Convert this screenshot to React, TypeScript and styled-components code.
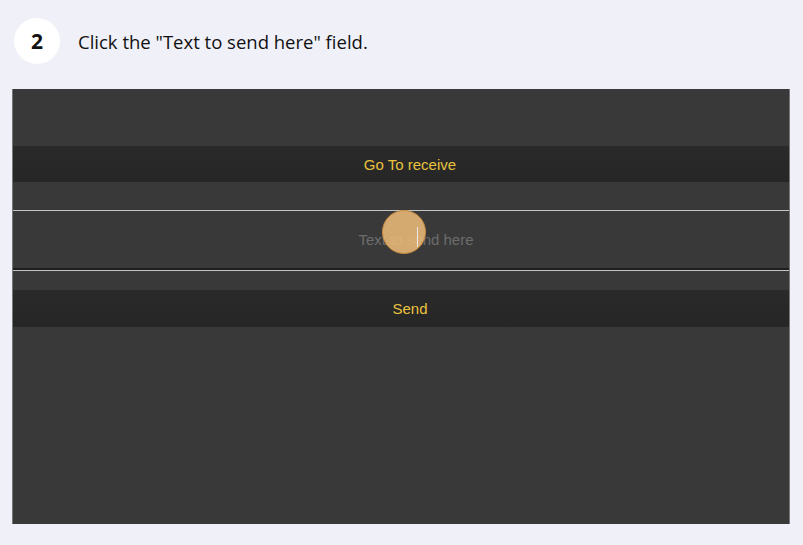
import React from "react";
import styled, { createGlobalStyle } from "styled-components";

const Global = createGlobalStyle`
  html, body { margin: 0; padding: 0; background: #eff0f8; }
  body { font-family: "Open Sans", "Noto Sans", sans-serif; }
`;

const Page = styled.div`
  width: 803px;
  height: 545px;
  background: #eff0f8;
  display: flex;
  flex-direction: column;
  overflow: hidden;
`;

const Header = styled.div`
  display: flex;
  align-items: center;
  gap: 18px;
  padding: 18px 0 0 14px;
  height: 46px;
`;

const StepBadge = styled.div`
  width: 46px;
  height: 46px;
  border-radius: 50%;
  background: #ffffff;
  display: flex;
  align-items: center;
  justify-content: center;
  font-family: "Open Sans", sans-serif;
  font-weight: 700;
  font-size: 21px;
  color: #111;
`;

const Title = styled.div`
  font-family: "Open Sans", sans-serif;
  font-size: 18.5px;
  color: #111;
`;

const Panel = styled.div`
  margin: 25px 0 0 12px;
  width: 776px;
  height: 435px;
  background: #393939;
  border-left: 1px solid #77777c;
  border-right: 1px solid #77777c;
  display: flex;
  flex-direction: column;
`;

const Spacer = styled.div<{ $h: number }>`
  height: ${(p) => p.$h}px;
  flex-shrink: 0;
`;

const Button = styled.div<{ $h: number }>`
  height: ${(p) => p.$h}px;
  flex-shrink: 0;
  background: linear-gradient(#2a2a2a, #262626);
  display: flex;
  align-items: center;
  justify-content: center;
  padding-left: 18px;
  font-family: "Liberation Sans", Arial, sans-serif;
  font-size: 15px;
  color: #e9c23e;
`;

const InputField = styled.div`
  position: relative;
  height: 60px;
  box-sizing: border-box;
  flex-shrink: 0;
  border-top: 1px solid #c4c4c4;
  border-bottom: 2px solid #1e1e1e;
  box-shadow: 0 1px 0 #c4c4c4;
  background: #393939;
  display: flex;
  align-items: center;
  justify-content: center;
  padding-left: 30px;
  font-family: "Liberation Sans", Arial, sans-serif;
  font-size: 15px;
  color: #6c6c6c;
`;

const Caret = styled.div`
  position: absolute;
  left: 404px;
  top: 16px;
  width: 1px;
  height: 20px;
  background: #e8e8e8;
  z-index: 2;
`;

const ClickMarker = styled.div`
  position: absolute;
  left: 369px;
  top: -1px;
  width: 42px;
  height: 42px;
  border-radius: 50%;
  background: rgba(234, 186, 120, 0.88);
  border: 1.5px solid #c98a42;
  z-index: 1;
`;

export default function App() {
  return (
    <Page>
      <Global />
      <Header>
        <StepBadge>2</StepBadge>
        <Title>Click the "Text to send here" field.</Title>
      </Header>
      <Panel>
        <Spacer $h={57} />
        <Button $h={36}>Go To receive</Button>
        <Spacer $h={28} />
        <InputField>
          Text to send here
          <ClickMarker />
          <Caret />
        </InputField>
        <Spacer $h={20} />
        <Button $h={37}>Send</Button>
      </Panel>
    </Page>
  );
}
